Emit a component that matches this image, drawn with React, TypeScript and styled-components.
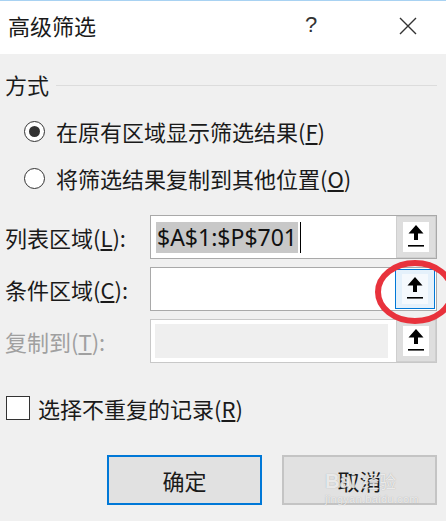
import React from "react";
import styled, { createGlobalStyle } from "styled-components";

const Global = createGlobalStyle`
  html, body { margin: 0; padding: 0; }
  body {
    width: 446px; height: 521px; overflow: hidden; background: #f0f0f0;
    font-family: "Noto Sans CJK SC", "Noto Sans", sans-serif;
  }
`;

const Dialog = styled.div`
  position: relative;
  width: 446px;
  height: 521px;
  background: #f0f0f0;
  color: #1a1a1a;
  overflow: hidden;
`;

const TitleBar = styled.div`
  height: 53px;
  background: #fff;
  border-top: 1px solid #a8d2f2;
  display: flex;
  align-items: center;
  padding-left: 8px;
`;

const Title = styled.div`
  font-size: 22px;
  line-height: 30px;
  flex: 1;
  margin-top: -5px;
`;

const Help = styled.div`
  width: 30px;
  text-align: center;
  font-family: "Liberation Sans", sans-serif;
  font-size: 22px;
  color: #333;
  margin-right: 70px;
  margin-top: -5px;
`;

const CloseBox = styled.div`
  width: 24px;
  height: 24px;
  margin-right: 26px;
  margin-top: -3px;
  display: flex;
  align-items: center;
  justify-content: center;
`;

const Body = styled.div`
  display: flex;
  flex-direction: column;
  padding: 0 9px 0 5px;
  font-size: 22px;
`;

const GroupHeader = styled.div`
  display: flex;
  align-items: center;
  height: 30px;
  margin-top: 15px;
  gap: 7px;
`;

const GroupLine = styled.div`
  flex: 1;
  height: 1px;
  background: #dcdcdc;
  margin-top: 2px;
`;

const OptionRow = styled.label<{ $top: number }>`
  display: flex;
  align-items: center;
  height: 30px;
  margin-top: ${(p) => p.$top}px;
  padding-left: 19px;
  gap: 11px;
`;

const RadioCircle = styled.span<{ $checked?: boolean }>`
  width: 21px;
  height: 21px;
  box-sizing: border-box;
  border-radius: 50%;
  border: 1px solid #333;
  background: #fff;
  display: flex;
  align-items: center;
  justify-content: center;
  &::after {
    content: "";
    display: ${(p) => (p.$checked ? "block" : "none")};
    width: 11px;
    height: 11px;
    border-radius: 50%;
    background: #333;
  }
`;

const Fields = styled.div`
  display: flex;
  flex-direction: column;
  gap: 8px;
  margin-top: 22px;
`;

const FieldRow = styled.div`
  display: grid;
  grid-template-columns: 145px 287px;
  align-items: center;
`;

const FieldLabel = styled.span<{ $disabled?: boolean }>`
  color: ${(p) => (p.$disabled ? "#a0a0a0" : "#1a1a1a")};
  white-space: nowrap;
`;

const FieldBox = styled.div<{ $disabled?: boolean }>`
  height: 44px;
  box-sizing: border-box;
  border: 1px solid ${(p) => (p.$disabled ? "#c8c8c8" : "#a9a9a9")};
  background: #fff;
  display: flex;
`;

const InputArea = styled.div<{ $disabled?: boolean }>`
  flex: 1;
  display: flex;
  align-items: center;
  padding-left: 5px;
  ${(p) =>
    p.$disabled &&
    `
    margin: 4px 8px 4px 4px;
    padding: 0;
    background: #efefef;
  `}
`;

const Selected = styled.span`
  font-family: "Noto Sans", sans-serif;
  font-size: 23px;
  line-height: 31px;
  background: #c8c8c8;
  padding: 0 1px;
  color: #111;
`;

const Caret = styled.span`
  width: 1px;
  height: 31px;
  background: #000;
  margin-left: 2px;
`;

const PickButton = styled.div<{ $active?: boolean }>`
  width: 40px;
  box-sizing: border-box;
  margin: ${(p) => (p.$active ? "1px 1px 1px 0" : "0")};
  border: 1px solid ${(p) => (p.$active ? "#0078d7" : "#cfcfcf")};
  background: ${(p) => (p.$active ? "#e5f1fb" : "#dedede")};
  display: flex;
  align-items: center;
  justify-content: center;
`;

const PickInner = styled.div<{ $active?: boolean }>`
  width: 26px;
  height: 30px;
  background: ${(p) => (p.$active ? "#f5f9fd" : "#fff")};
  display: flex;
  align-items: center;
  justify-content: center;
`;

const CheckRow = styled.label`
  display: flex;
  align-items: center;
  height: 30px;
  margin-top: 30px;
  padding-left: 1px;
  gap: 8px;
`;

const CheckSquare = styled.span`
  width: 24px;
  height: 24px;
  box-sizing: border-box;
  border: 1px solid #333;
  background: #fff;
`;

const ButtonRow = styled.div`
  display: flex;
  justify-content: flex-end;
  gap: 20px;
  margin-top: 32px;
`;

const DlgButton = styled.div<{ $default?: boolean }>`
  width: 155px;
  height: 50px;
  box-sizing: border-box;
  border: 2px solid ${(p) => (p.$default ? "#0078d7" : "#c4c4c4")};
  background: #e1e1e1;
  display: flex;
  align-items: center;
  justify-content: center;
  font-size: 22px;
  color: #1a1a1a;
`;

const Watermark = styled.div`
  position: absolute;
  left: 325px;
  top: 470px;
  display: flex;
  flex-direction: column;
  align-items: flex-start;
  color: rgba(255, 255, 255, 0.75);
  text-shadow: 0 0 1px rgba(120, 120, 120, 0.6);
  pointer-events: none;
`;

const WmTop = styled.div`
  display: flex;
  align-items: baseline;
  gap: 6px;
  font-family: "Liberation Sans", sans-serif;
  font-weight: bold;
  font-size: 20px;
  line-height: 22px;
`;

const WmCjk = styled.span`
  font-family: "Noto Sans CJK SC", sans-serif;
  font-weight: normal;
  font-size: 17px;
`;

const WmBottom = styled.div`
  font-family: "Liberation Sans", sans-serif;
  font-size: 11px;
  line-height: 14px;
  letter-spacing: 0.3px;
`;

const Annotation = styled.svg`
  position: absolute;
  left: 370px;
  top: 255px;
  pointer-events: none;
`;

const UpIcon = () => (
  <svg width="18" height="26" viewBox="0 0 18 26">
    <path d="M9 1 L16.5 9.5 L11 9.5 L11 16 L7 16 L7 9.5 L1.5 9.5 Z" fill="#000" />
    <rect x="1" y="21" width="16" height="1.6" fill="#000" />
  </svg>
);

export default function App() {
  return (
    <Dialog>
      <Global />
      <TitleBar>
        <Title>高级筛选</Title>
        <Help>?</Help>
        <CloseBox>
          <svg width="20" height="20" viewBox="0 0 20 20">
            <path d="M2 2 L18 18 M18 2 L2 18" stroke="#333" strokeWidth="1.4" />
          </svg>
        </CloseBox>
      </TitleBar>
      <Body>
        <GroupHeader>
          <span>方式</span>
          <GroupLine />
        </GroupHeader>
        <OptionRow $top={17}>
          <RadioCircle $checked />
          <span>
            在原有区域显示筛选结果(<u>F</u>)
          </span>
        </OptionRow>
        <OptionRow $top={17}>
          <RadioCircle />
          <span>
            将筛选结果复制到其他位置(<u>O</u>)
          </span>
        </OptionRow>
        <Fields>
          <FieldRow>
            <FieldLabel>
              列表区域(<u>L</u>):
            </FieldLabel>
            <FieldBox>
              <InputArea>
                <Selected>$A$1:$P$701</Selected>
                <Caret />
              </InputArea>
              <PickButton>
                <PickInner>
                  <UpIcon />
                </PickInner>
              </PickButton>
            </FieldBox>
          </FieldRow>
          <FieldRow>
            <FieldLabel>
              条件区域(<u>C</u>):
            </FieldLabel>
            <FieldBox>
              <InputArea />
              <PickButton $active>
                <PickInner $active>
                  <UpIcon />
                </PickInner>
              </PickButton>
            </FieldBox>
          </FieldRow>
          <FieldRow>
            <FieldLabel $disabled>
              复制到(<u>T</u>):
            </FieldLabel>
            <FieldBox $disabled>
              <InputArea $disabled />
              <PickButton>
                <PickInner>
                  <UpIcon />
                </PickInner>
              </PickButton>
            </FieldBox>
          </FieldRow>
        </Fields>
        <CheckRow>
          <CheckSquare />
          <span>
            选择不重复的记录(<u>R</u>)
          </span>
        </CheckRow>
        <ButtonRow>
          <DlgButton $default>确定</DlgButton>
          <DlgButton>取消</DlgButton>
        </ButtonRow>
      </Body>
      <Annotation width="90" height="72" viewBox="0 0 90 72">
        <ellipse cx="45" cy="37" rx="37" ry="29" fill="none" stroke="#e8323c" strokeWidth="6" />
      </Annotation>
      <Watermark>
        <WmTop>
          <span>Bai</span>
          <WmCjk>经验</WmCjk>
        </WmTop>
        <WmBottom>jingyan.baidu.com</WmBottom>
      </Watermark>
    </Dialog>
  );
}
